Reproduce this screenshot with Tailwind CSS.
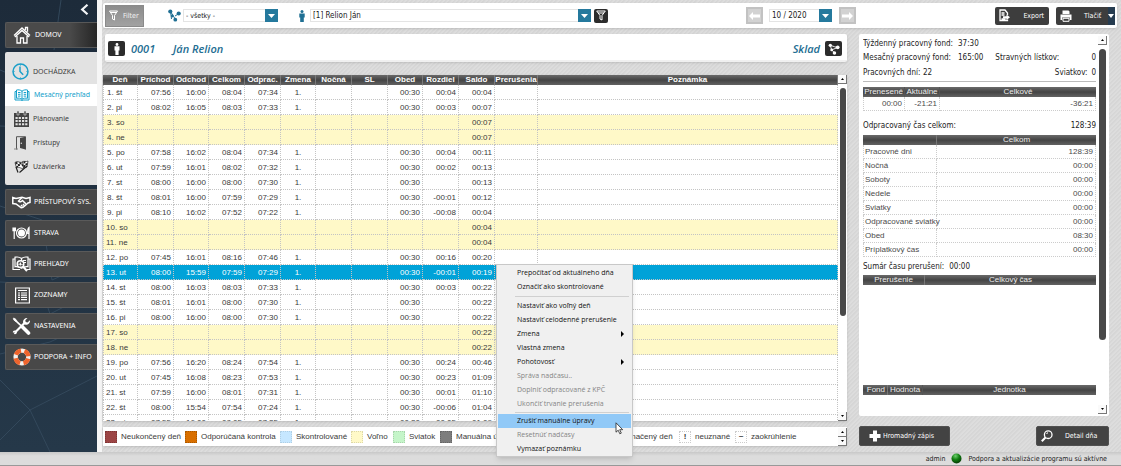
<!DOCTYPE html>
<html lang="sk">
<head>
<meta charset="utf-8">
<title>Dochádzka – Mesačný prehľad</title>
<script src="https://cdn.jsdelivr.net/npm/@tailwindcss/browser@4"></script>
</head>
<body class="h-screen overflow-hidden flex flex-col relative text-[8px] leading-[10px] text-[#222] font-['DejaVu_Sans_Condensed','DejaVu_Sans',sans-serif]">
<div class="flex flex-1 min-h-0">

  <nav class="relative w-[97px] shrink-0 bg-gradient-to-b from-[#1d2b3a] to-[#253849] pl-[5px] text-white text-[7px] font-['Noto_Sans',sans-serif] overflow-hidden">
    <svg class="absolute inset-0 w-full h-full" viewBox="0 0 97 452" preserveAspectRatio="none" fill="none" stroke="#33485b" stroke-width="1" aria-hidden="true"><path d="M61 0L54 50M0 70l97 40M0 126l97 4M0 206l42 14 10 60L97 260M0 282l40 2 10 30L97 290M0 354l50-12 47-22M0 380l30 30 67-34M30 410l20 42M0 440l30-30"/></svg>
    <div class="relative flex flex-col gap-1">
      <div class="flex justify-end h-[18px] pr-2 items-center">
        <button aria-label="Zbaliť menu" class="flex"><svg width="9" height="11" viewBox="0 0 9 11" fill="none" stroke="#f2f4f6" stroke-width="2.2"><path d="M7.500.8L2.200 5.500l5.300 4.700"/></svg></button>
      </div>
      <a href="#" class="flex items-center gap-1 h-[26px] pl-[7px] bg-gradient-to-r from-[#4a4a4a] from-70% to-[#262626] border border-r-0 border-[#585858] rounded-l-xs">
        <svg class="shrink-0" width="18" height="18" viewBox="0 0 18 18" fill="none" stroke="#fff" stroke-width="1.300"><path d="M1 9.500L9 2l8 7.500M1.800 11L9 4.500l7.200 6.500M4 10v7h3.500v-5h3v5H14v-7M12.500 4V1.500h2v4.300"/></svg>DOMOV</a>
      <div class="h-[133px] bg-[#e2e2e2] text-[#3c3c3c] pt-[7px] rounded-l-xs">
        <a href="#" class="flex items-center gap-1 h-[25px] pl-[7px]"><svg class="shrink-0" width="17" height="17" viewBox="0 0 17 17" fill="none" stroke="#1b9fc9" stroke-width="1.500"><circle cx="8.500" cy="8.500" r="7.500"/><path d="M8 3.500v5l3.200 3.200" /><path stroke-width="1" d="M8.500 1.500v1M8.500 14.500v1M1.500 8.500h1M14.500 8.500h1"/></svg>DOCHÁDZKA</a>
        <a href="#" class="flex items-center gap-1 h-[22px] pl-[9px] bg-white text-[#14a0cb]"><svg class="shrink-0" width="16" height="12" viewBox="0 0 16 12" fill="none" stroke="#14a0cb" stroke-width="1"><path d="M8 2.200C6.500.8 4 .6 2.500 1v8.300c2-.4 4-.2 5.500 1 1.500-1.200 3.500-1.400 5.500-1V1C12 .6 9.500.8 8 2.200zM8 2v8.500M2.500 2.500H1v8.500h6l1 .6 1-.6h6V2.500h-1.500M4 3.500h2.500M4 5.300h2.500M4 7.100h2.500M9.700 3.500h2.500M9.700 5.300h2.500M9.700 7.100h2.500"/></svg>Mesačný prehľad</a>
        <a href="#" class="flex items-center gap-1 h-[26px] pl-[9px]"><svg class="shrink-0" width="15" height="16" viewBox="0 0 15 16"><path d="M0 2h15v14H0z" fill="#444"/><path d="M3 0h2v4H3zM10 0h2v4h-2z" fill="#444" stroke="#e2e2e2" stroke-width=".6"/><path fill="#e2e2e2" d="M1.500 6h2.200v2H1.500zM4.700 6h2.200v2H4.700zM8 6h2.200v2H8zM11.200 6h2.200v2h-2.200zM1.500 9h2.200v2H1.500zM4.700 9h2.200v2H4.700zM8 9h2.200v2H8zM11.200 9h2.200v2h-2.200zM1.500 12.200h2.200v2H1.500zM4.700 12.200h2.200v2H4.700zM8 12.200h2.200v2H8zM11.200 12.200h2.200v2h-2.200z"/></svg>Plánovanie</a>
        <a href="#" class="flex items-center gap-1 h-[22px] pl-[9px]"><svg class="shrink-0" width="15" height="14" viewBox="0 0 15 14"><path d="M2.500 13.500V.7h9v12.800" fill="none" stroke="#555"/><path fill="#444" d="M6 2l5.500-1.300v12.800L6 12z"/><path d="M0 13h4" stroke="#888"/><circle cx="7.300" cy="7.300" r=".7" fill="#e2e2e2"/></svg>Prístupy</a>
        <a href="#" class="flex items-center gap-1 h-[25px] pl-[9px]"><svg class="shrink-0" width="15" height="13" viewBox="0 0 15 13"><path fill="#fff" stroke="#333" stroke-width=".8" d="M1 2.500C4 .2 6 3.500 8.500 2l1.200 6C7 9.500 5.500 6 2.500 8zM8 2c2-1.500 4 .3 6-1l-1 6c-1.500 1-3 0-4 1"/><path fill="#222" d="M1.200 2.500l2-.8.5 2-2 .8zM5.300 2.200l2 .3.4 2-2-.3zM3.600 4l2-.1.500 2-2 .1zM7.500 4.500l1.700-.6.4 2-1.500.5zM2.300 6l1.700-.3.300 1.300-1.700.6zM9.500 1.500l2-.2-.3 2-1.800.2zM11.500 3.500l2-.4-.4 2-1.800.4zM10 5l1.500.3-.4 1.800-1.500-.2z"/><path d="M2 7l2 5.500M13 6L5.500 12.500" stroke="#222" stroke-width="1.200"/></svg>Uzávierka</a>
      </div>
      <div class="flex flex-col gap-[5px]">
        <a href="#" class="flex items-center gap-[3px] h-[26px] pl-[6px] bg-[#484848] border border-r-0 border-[#5a5a5a] rounded-l-xs whitespace-nowrap"><svg class="shrink-0" width="19" height="13" viewBox="0 0 19 13" fill="none" stroke="#fff" stroke-width="1.500"><path d="M.8 1.500v6L4 8l5 3.700c1 .4 2 0 4.500-2.500L16 7l2-.5v-5L14 2.500 10 1.300 4 2.500.8 1.500z"/><path d="M10 1.500L6.500 5c1 1.500 3 .5 4-.5L14 8M9 9l1.500 1.500M11 8l1.500 1.700"/></svg>PRÍSTUPOVÝ SYS.</a>
        <a href="#" class="flex items-center gap-[3px] h-[26px] pl-[6px] bg-[#484848] border border-r-0 border-[#5a5a5a] rounded-l-xs"><svg class="shrink-0" width="19" height="14" viewBox="0 0 19 14" fill="none" stroke="#fff"><circle cx="9.500" cy="7" r="5" stroke-width="1.200"/><circle cx="9.500" cy="7" r="3.500" fill="#fff" stroke="none"/><path stroke-width="1.200" d="M1 1.500v3.200h2.400V1.500M2.200 1.500V13M17 13V1.500c-1.200 1-1.500 3-1.300 6H17"/></svg>STRAVA</a>
        <a href="#" class="flex items-center gap-[3px] h-[26px] pl-[6px] bg-[#484848] border border-r-0 border-[#5a5a5a] rounded-l-xs"><svg class="shrink-0" width="19" height="16" viewBox="0 0 19 16" fill="none" stroke="#fff" stroke-width="1.200"><path d="M9.500 2.500C7.500.8 5 .8 3 1.200v9.500c2-.3 4-.2 6.500 1.500 2.500-1.700 4.500-1.800 6.500-1.500V1.200c-2-.4-4.500-.4-6.500 1.300zM9.500 2.500V7M3 3H1v10.500h7M16 3h2v10.500h-3M11 4.500h3M11 6.500h3"/><circle cx="8.500" cy="8" r="3.300" fill="#484848" stroke-width="1.500"/><path stroke-width="2" d="M11 10.500l4 4.500"/><path d="M7 9V7.500M8.500 9.500v-3M10 9V8"/></svg>PREHĽADY</a>
        <a href="#" class="flex items-center gap-[3px] h-[26px] pl-2 bg-[#484848] border border-r-0 border-[#5a5a5a] rounded-l-xs"><svg class="shrink-0" width="17" height="17" viewBox="0 0 17 17" fill="none" stroke="#fff"><path stroke-width="1.200" d="M1.600 1h13.800v15H1.600z"/><path d="M4 3.500h9M4 6h2M7 6h6M4 8.200h2M7 8.200h6M4 10.400h2M7 10.400h6M4 12.600h2M7 12.600h6" stroke-width="1.200"/></svg>ZOZNAMY</a>
        <a href="#" class="flex items-center gap-[3px] h-[26px] pl-[6px] bg-[#484848] border border-r-0 border-[#5a5a5a] rounded-l-xs"><svg class="shrink-0" width="19" height="18" viewBox="0 0 19 18" fill="none" stroke="#fff"><path stroke-width="2.200" d="M3 15.500L12.500 6"/><path fill="#fff" stroke="none" d="M11 5c0-2.500 2-4.300 4.500-4L13.300 3.300l.4 1.800 1.800.4L18 3.200c.3 2.600-1.600 4.600-4.300 4.500L11.500 7z"/><path fill="#fff" stroke="none" d="M.8 15.500c0-1.500 1-2.300 2.400-2 1.400.3 2 1.500 1.500 2.700-.5 1-2 1.400-3 .6l1.300-1.200z"/><path d="M2 2.200l7 6.500" stroke-width="1.600"/><path d="M1.200 1l2 .6 1.500 2-.9.9-2-1.500z" fill="#fff" stroke-width=".5"/><path d="M10.500 10l6 6" stroke-width="3.600" stroke-linecap="round"/></svg>NASTAVENIA</a>
        <a href="#" class="flex items-center gap-[3px] h-[26px] pl-[7px] bg-[#484848] border border-r-0 border-[#5a5a5a] rounded-l-xs whitespace-nowrap"><svg class="shrink-0" width="18" height="18" viewBox="0 0 18 18" fill="none" stroke-width="4.400"><circle cx="9" cy="9" r="6.400" stroke="#f4f0ec"/><circle cx="9" cy="9" r="6.400" stroke="#f0642c" stroke-dasharray="6.500 3.553" stroke-dashoffset="8.300"/></svg>PODPORA + INFO</a>
      </div>
    </div>
  </nav>

  <main class="flex-1 min-w-0 flex flex-col pt-[3px] bg-[repeating-linear-gradient(135deg,#d6d6d6_0px,#d6d6d6_1px,#dddddd_2px,#dddddd_3px)] border-l-[5px] border-[#f6f6f6] pl-px">
    <header class="h-[25px] mr-1 bg-white rounded-xs shadow-sm flex items-center pl-[2px] pr-[2px]">
      <button class="h-[22px] w-[39px] shrink-0 bg-gradient-to-b from-[#8c8c8c] to-[#a2a2a2] border border-[#8a8a8a] text-[#f2f2f2] flex items-center gap-[5px] pl-[3px] text-[7px]"><svg width="9" height="11" viewBox="0 0 9 11" fill="none" stroke="#fff"><path d="M.5 1h8L5.500 5.500V10L3.500 9V5.500zM1.500 2.500h6"/></svg>Filter</button>
      <svg class="ml-6 shrink-0" width="13" height="13" viewBox="0 0 13 13"><path d="M2.500 2.500L3.500 10M2.500 2.500L7.500 10.500M7 7l4-2.500" stroke="#1f6f93" stroke-width="1"/><g fill="#1f6f93"><circle cx="2.300" cy="2.500" r="2.100"/><circle cx="10.700" cy="4.500" r="2.100"/><circle cx="4.300" cy="7" r="1.400"/><circle cx="7.300" cy="10.700" r="1.900"/></g></svg>
      <div class="ml-[2px] flex w-[95px] h-[13px] shrink-0 border border-r-0 border-[#e4e4e4]">
        <select aria-label="Stredisko" class="appearance-none flex-1 min-w-0 pl-[2px] text-[7px] text-[#222]"><option>- všetky -</option></select>
        <span class="w-[13px] -my-px bg-[#24799d] flex items-center justify-center"><svg width="7" height="4" viewBox="0 0 7 4"><path fill="#fff" d="M0 0h7L3.500 4z"/></svg></span>
      </div>
      <svg class="ml-[21px] shrink-0" width="6" height="12" viewBox="0 0 6 12" fill="#1f6f93"><circle cx="3" cy="1.500" r="1.500"/><path d="M.3 3.500h5.400v4H4.800V12H1.200V7.500H.3z"/></svg>
      <div class="ml-[5px] flex flex-1 min-w-[90px] h-[13px] border border-r-0 border-[#e4e4e4]">
        <select aria-label="Osoba" class="appearance-none flex-1 min-w-0 pl-[2px] text-[#222]"><option>[1] Relion Ján</option></select>
        <span class="w-[13px] -my-px bg-[#24799d] flex items-center justify-center"><svg width="7" height="4" viewBox="0 0 7 4"><path fill="#fff" d="M0 0h7L3.500 4z"/></svg></span>
      </div>
      <button aria-label="Filtrovať osoby" class="ml-[3px] size-[14px] shrink-0 bg-[#2c2c2c] rounded-xs flex items-center justify-center"><svg width="10" height="11" viewBox="0 0 10 11" fill="none" stroke="#fff"><path d="M.7 1h8.600L6 5.500V10L4 9V5.500zM2 3h6"/></svg></button>
      <button aria-label="Predchádzajúci mesiac" class="ml-[138px] w-[17px] h-[17px] shrink-0 bg-[#d2d2d2] border-2 border-[#c2c2c2] flex items-center justify-center"><svg width="11" height="8" viewBox="0 0 11 8"><path fill="#fff" d="M0 4l4-4v2.500h7v3H4V8z"/></svg></button>
      <div class="ml-[6px] flex w-[63px] h-[13px] shrink-0 border border-r-0 border-[#e4e4e4]">
        <select aria-label="Mesiac" class="appearance-none flex-1 min-w-0 pl-[2px] text-[#222]"><option>10 / 2020</option></select>
        <span class="w-[13px] -my-px bg-[#24799d] flex items-center justify-center"><svg width="7" height="4" viewBox="0 0 7 4"><path fill="#fff" d="M0 0h7L3.500 4z"/></svg></span>
      </div>
      <button aria-label="Nasledujúci mesiac" class="ml-[7px] w-[17px] h-[17px] shrink-0 bg-[#d2d2d2] border-2 border-[#c2c2c2] flex items-center justify-center"><svg width="11" height="8" viewBox="0 0 11 8"><path fill="#fff" d="M11 4L7 0v2.500H0v3h7V8z"/></svg></button>
      <button class="ml-[139px] w-[54px] h-[18px] shrink-0 bg-[#3d3d3d] text-white rounded-xs flex items-center justify-between pl-1 pr-[5px] text-[7px]"><svg width="11" height="13" viewBox="0 0 11 13" fill="none" stroke="#fff" stroke-width="1.300"><path d="M8.500 6V4L6 1H1v10.500h7.500V10.500M2.500 4h3M2.500 6h3M2.500 10h4"/><path fill="#fff" stroke="none" d="M4 7.200h3.500V5.500L11 8.300l-3.500 2.800V9.400H4z"/></svg>Export</button>
      <button class="ml-[7px] w-[59px] h-[18px] shrink-0 bg-[#3d3d3d] text-white rounded-xs flex items-center pl-1 text-[7px]"><svg width="12" height="12" viewBox="0 0 12 12"><path fill="#fff" d="M2.500.5h6l1 1V4h-7zM.5 4.500h11V10H9.800V7.500H2.200V10H.5z"/><path d="M3 8.300h6v3H3z" fill="#3d3d3d" stroke="#fff"/></svg><span class="ml-3">Tlačiť</span><span class="ml-auto w-[7px] h-full bg-[#263c50] flex items-center"><svg width="6" height="4" viewBox="0 0 6 4"><path fill="#fff" d="M0 0h6L3 4z"/></svg></span></button>
    </header>

    <div class="flex flex-1 min-h-0 gap-3 mt-[6px] mr-3 mb-[6px]">
      <div class="flex-1 min-w-0 flex flex-col">
        <section class="h-[28px] shrink-0 ml-[2px] bg-white rounded-xs shadow-sm flex items-center pl-[3px] pr-[5px] text-[11px] font-semibold italic text-[#1d6d92] font-['Open_Sans',sans-serif] border-b-2 border-[#f0f0f0]">
          <span class="w-[17px] h-[15px] mt-[3px] bg-[#2c2c2c] rounded-xs flex items-center justify-center"><svg width="6" height="12" viewBox="0 0 6 12" fill="#fff"><circle cx="3" cy="1.500" r="1.400"/><path d="M.5 3.300h5v4.200h-.9V12H1.400V7.500H.5z"/></svg></span>
          <span class="ml-[6px] mt-[3px] w-[42px]">0001</span><span class="mt-[3px]">Ján Relion</span>
          <span class="ml-auto mt-[3px] mr-[5px]">Sklad</span>
          <span class="w-[17px] h-[15px] mt-[3px] bg-[#2c2c2c] rounded-xs flex items-center justify-center"><svg width="12" height="12" viewBox="0 0 13 13"><path d="M2.500 2.500L4 7.500l3 3M2.500 2.500L7 4l4 1M4 7.500L10 5" stroke="#fff"/><g fill="#fff"><circle cx="2.500" cy="2.500" r="1.800"/><circle cx="10.500" cy="4.700" r="2"/><circle cx="4" cy="7.500" r="1.500"/><circle cx="7" cy="10.800" r="1.900"/></g></svg></span>
        </section>

        <section class="mt-[13px] flex-1 min-h-0 flex bg-white shadow-sm font-['Liberation_Sans',Arial,sans-serif] text-[#3a3a3a]">
          <div class="flex-1 min-w-0 overflow-hidden">
            <table class="w-full table-fixed border-separate border-spacing-0">
              <colgroup><col class="w-[35px]"><col class="w-[36px]"><col class="w-[35px]"><col class="w-[36px]"><col class="w-[36px]"><col class="w-[35px]"><col class="w-[36px]"><col class="w-[36px]"><col class="w-[35px]"><col class="w-[36px]"><col class="w-[36px]"><col class="w-[43px]"><col></colgroup>
              <thead class="bg-gradient-to-b from-[#6a6a6a] via-[#444] to-[#626262] text-white"><tr id="head"></tr></thead>
              <tbody id="days"></tbody>
            </table>
          </div>
          <div class="w-[9px] flex flex-col items-center justify-between bg-white shrink-0">
            <button aria-label="Hore" class="size-[9px] bg-[#fafafa] border-r border-b border-[#777] flex items-center justify-center"><svg width="3" height="2" viewBox="0 0 3 2"><path d="M0 2h3L1.500 0z"/></svg></button>
            <div class="w-[6px] mt-1 h-[228px] rounded-full bg-[#484848]"></div>
            <div class="flex-1"></div>
            <button aria-label="Dole" class="size-[9px] bg-[#fafafa] border-r border-b border-[#777] flex items-center justify-center"><svg width="3" height="2" viewBox="0 0 3 2"><path d="M0 0h3L1.500 2z"/></svg></button>
          </div>
        </section>

        <section class="mt-[6px] h-[19px] shrink-0 bg-white shadow-sm flex items-center pl-[2px] font-['Liberation_Sans',Arial,sans-serif] text-[#3a3a3a] whitespace-nowrap">
          <span class="w-[80px] shrink-0 flex items-center gap-1"><i class="size-3 bg-[#9c4545] border border-dotted border-[#7d3535]"></i>Neukončený deň</span>
          <span class="w-[95px] shrink-0 flex items-center gap-1"><i class="size-3 bg-[#d86f00] border border-dotted border-[#a85800]"></i>Odporúčaná kontrola</span>
          <span class="w-[71px] shrink-0 flex items-center gap-1"><i class="size-3 bg-[#c6e7ff] border border-dotted border-[#b0cfe4]"></i>Skontrolované</span>
          <span class="w-[42px] shrink-0 flex items-center gap-1"><i class="size-3 bg-[#fff9c8] border border-dotted border-[#ddd8a8]"></i>Voľno</span>
          <span class="w-[47px] shrink-0 flex items-center gap-1"><i class="size-3 bg-[#c5f5c9] border border-dotted border-[#a8d4ac]"></i>Sviatok</span>
          <span class="w-[165px] shrink-0 flex items-center gap-1"><i class="size-3 bg-[#7d7d7d] border border-dotted border-[#666]"></i>Manuálna úprava</span>
          <span class="w-[74px] shrink-0 flex items-center gap-1"><i class="size-3 bg-[#00a2d8]"></i>Označený deň</span>
          <span class="w-[56px] shrink-0 flex items-center gap-1"><b class="size-3 border border-dotted border-[#ccc] text-center">!</b>neuznané</span>
          <span class="flex items-center gap-1"><b class="size-3 border border-dotted border-[#ccc] text-center">~</b>zaokrúhlenie</span>
          <span class="ml-auto flex flex-col">
            <button aria-label="Legenda hore" class="size-[9px] bg-[#fafafa] border-r border-b border-[#777] flex items-center justify-center"><svg width="3" height="2" viewBox="0 0 3 2"><path d="M0 2h3L1.500 0z"/></svg></button>
            <button aria-label="Legenda dole" class="size-[9px] bg-[#fafafa] border-r border-b border-[#777] flex items-center justify-center"><svg width="3" height="2" viewBox="0 0 3 2"><path d="M0 0h3L1.500 2z"/></svg></button>
          </span>
        </section>
      </div>

      <aside class="w-[250px] shrink-0 flex flex-col">
        <div class="flex-1 min-h-0 bg-white rounded-xs flex pl-1 pr-[2px] pt-[2px] pb-[2px]">
          <div class="flex-1 min-w-0 overflow-hidden pt-px">
            <div class="flex h-[14px] items-center"><span class="w-[95px]">Týždenný pracovný fond:</span><span>37:30</span></div>
            <div class="flex h-[14px] items-center"><span class="w-[95px]">Mesačný pracovný fond:</span><span>165:00</span><span class="ml-3">Stravných lístkov:</span><span class="ml-auto">0</span></div>
            <div class="flex h-[17px] items-center border-b border-[#bbb]"><span class="w-[60px] whitespace-nowrap">Pracovných dní:</span><span>22</span><span class="ml-auto mr-1">Sviatkov:</span><span>0</span></div>
            <table class="mt-[5px] w-full table-fixed border-separate border-spacing-0 font-['Liberation_Sans',Arial,sans-serif] text-[#4a4a4a]">
              <colgroup><col class="w-[42px]"><col class="w-[35px]"><col></colgroup>
              <thead class="bg-gradient-to-b from-[#6a6a6a] via-[#444] to-[#626262] text-[#eee]"><tr class="h-[10px]"><th class="p-0 font-normal border-r border-[#555]">Prenesené</th><th class="p-0 font-normal border-r border-[#555]">Aktuálne</th><th class="p-0 font-normal">Celkové</th></tr></thead>
              <tbody><tr class="h-[14px] text-right"><td class="py-0 pl-0 pr-[2px] border-b border-r border-l border-dotted border-[#ccc]">00:00</td><td class="py-0 pl-0 pr-[2px] border-b border-r border-dotted border-[#ccc]">-21:21</td><td class="py-0 pl-0 pr-[2px] border-b border-r border-dotted border-[#ccc]">-36:21</td></tr></tbody>
            </table>
            <div class="flex h-6 items-center justify-between pt-[6px]"><span>Odpracovaný čas celkom:</span><span>128:39</span></div>
            <table class="w-full table-fixed border-separate border-spacing-0 font-['Liberation_Sans',Arial,sans-serif] text-[#4a4a4a]">
              <colgroup><col class="w-[74px]"><col></colgroup>
              <thead class="bg-gradient-to-b from-[#6a6a6a] via-[#444] to-[#626262] text-[#eee]"><tr class="h-[10px]"><th class="p-0 border-r border-[#777]"></th><th class="p-0 font-normal">Celkom</th></tr></thead>
              <tbody id="totals"></tbody>
            </table>
            <div class="flex h-[18px] items-center gap-[5px] pt-[2px]"><span>Sumár času prerušení:</span><span>00:00</span></div>
            <table class="w-full table-fixed border-separate border-spacing-0 font-['Liberation_Sans',Arial,sans-serif]">
              <colgroup><col class="w-[62px]"><col></colgroup>
              <thead class="bg-gradient-to-b from-[#6a6a6a] via-[#444] to-[#626262] text-[#eee]"><tr class="h-[10px]"><th class="p-0 font-normal border-r border-[#777]">Prerušenie</th><th class="p-0 font-normal">Celkový čas</th></tr></thead>
            </table>
            <table class="mt-[100px] w-full table-fixed border-separate border-spacing-0 font-['Liberation_Sans',Arial,sans-serif]">
              <colgroup><col class="w-[25px]"><col class="w-[35px]"><col></colgroup>
              <thead class="bg-gradient-to-b from-[#6a6a6a] via-[#444] to-[#626262] text-[#eee]"><tr class="h-[10px]"><th class="p-0 font-normal text-right pr-[2px] border-r border-[#777]">Fond</th><th class="p-0 font-normal border-r border-[#555]">Hodnota</th><th class="p-0 font-normal">Jednotka</th></tr></thead>
            </table>
          </div>
          <div class="ml-[2px] w-[9px] flex flex-col items-center shrink-0">
            <button aria-label="Panel hore" class="size-[9px] shrink-0 bg-[#fafafa] border-r border-b border-[#777] flex items-center justify-center"><svg width="3" height="2" viewBox="0 0 3 2"><path d="M0 2h3L1.500 0z"/></svg></button>
            <div class="w-[7px] mt-1 h-[291px] rounded-full bg-[#484848]"></div>
            <div class="flex-1"></div>
            <button aria-label="Panel dole" class="size-[9px] shrink-0 bg-[#fafafa] border-r border-b border-[#777] flex items-center justify-center"><svg width="3" height="2" viewBox="0 0 3 2"><path d="M0 0h3L1.500 2z"/></svg></button>
          </div>
        </div>
        <div class="mt-[10px] flex justify-between h-5 shrink-0 text-[7px] text-white">
          <button class="w-[91px] bg-[#434343] border border-[#505050] rounded-xs flex items-center pl-[9px] gap-[2px]"><svg width="12" height="12" viewBox="0 0 12 12"><path fill="#fff" d="M4 .5h4V4h3.500v4H8v3.500H4V8H.5V4H4z"/></svg>Hromadný zápis</button>
          <button class="w-[73px] bg-[#434343] border border-[#505050] rounded-xs flex items-center pl-1 gap-3"><svg width="12" height="12" viewBox="0 0 12 12" fill="none" stroke="#fff"><circle cx="7.200" cy="4.700" r="3.800" stroke-width="1.300"/><path stroke-width="2" d="M4.500 7.500L.8 11.200"/><path d="M5.500 4a2 2 0 0 1 1.500-1.300"/></svg>Detail dňa</button>
        </div>
      </aside>
    </div>
  </main>
</div>

<footer class="h-[14px] shrink-0 bg-gradient-to-b from-[#c8c8c8] to-[#dcdcdc] to-30% border-b border-[#999] flex items-center justify-end pr-[14px] gap-[6px] text-[7px]">
  <span>admin</span>
  <svg width="11" height="11" viewBox="0 0 11 11"><defs><radialGradient id="led" cx=".4" cy=".25" r=".75"><stop offset="0" stop-color="#6fd06f"/><stop offset=".5" stop-color="#128012"/><stop offset="1" stop-color="#053d05"/></radialGradient></defs><circle cx="5.500" cy="5.500" r="5" fill="url(#led)"/></svg>
  <span>Podpora a aktualizácie programu sú aktívne</span>
</footer>

<div role="menu" class="absolute left-[496px] top-[264px] w-[137px] bg-[#f0f0f0] border border-[#c8c8c8] shadow-md px-px pt-px text-[#111] text-[7px] font-['Open_Sans',sans-serif] flex flex-col" id="menu"></div>
<svg class="absolute left-[615px] top-[422px]" width="9" height="13" viewBox="0 0 9 13"><path d="M1 .8v9.400l2.200-2 1.600 3.600 1.500-.7-1.600-3.400h3z" fill="#fff" stroke="#222" stroke-width=".8"/></svg>

<script>
const heads = ['Deň','Príchod','Odchod','Celkom','Odprac.','Zmena','Nočná','SL','Obed','Rozdiel','Saldo','Prerušenia','Poznámka'];
document.getElementById('head').innerHTML = heads.map(h => `<th class="h-[10px] p-0 font-bold text-center border-r border-[#7a7a7a] whitespace-nowrap">${h}</th>`).join('');
const days = [
 ['1. št','07:56','16:00','08:04','07:34','00:04','00:04'],
 ['2. pi','08:02','16:05','08:03','07:33','00:03','00:07'],
 ['3. so','00:07'],['4. ne','00:07'],
 ['5. po','07:58','16:02','08:04','07:34','00:04','00:11'],
 ['6. ut','07:59','16:01','08:02','07:32','00:02','00:13'],
 ['7. st','08:00','16:00','08:00','07:30','','00:13'],
 ['8. št','08:01','16:00','07:59','07:29','-00:01','00:12'],
 ['9. pi','08:10','16:02','07:52','07:22','-00:08','00:04'],
 ['10. so','00:04'],['11. ne','00:04'],
 ['12. po','07:45','16:01','08:16','07:46','00:16','00:20'],
 ['13. ut','08:00','15:59','07:59','07:29','-00:01','00:19'],
 ['14. st','08:00','16:03','08:03','07:33','00:03','00:22'],
 ['15. št','08:01','16:01','08:00','07:30','','00:22'],
 ['16. pi','08:00','16:00','08:00','07:30','','00:22'],
 ['17. so','00:22'],['18. ne','00:22'],
 ['19. po','07:56','16:20','08:24','07:54','00:24','00:46'],
 ['20. ut','07:45','16:08','08:23','07:53','00:23','01:09'],
 ['21. st','07:59','16:00','08:01','07:31','00:01','01:10'],
 ['22. št','08:00','15:54','07:54','07:24','-00:06','01:04'],
 ['23. pi','07:55','16:00','08:05','07:35','-00:05','01:09']
];
const td = (t, c) => `<td class="h-[15px] pt-px pb-0 border-b border-r border-dotted border-[#c4c4c4] ${c}">${t}</td>`;
document.getElementById('days').innerHTML = days.map((d, i) => {
  const off = d.length === 2;
  const v = off ? [d[0],'','','','','','','','','',d[1],'',''] : [d[0],d[1],d[2],d[3],d[4],'1.','','','00:30',d[5],d[6],'',''];
  const row = i === 12 ? 'bg-[#00a2d8] text-white' : off ? 'bg-[#fff9c8]' : 'bg-white';
  return `<tr class="${row}">` + v.map((t, k) => td(t, k === 0 ? (i < 9 ? 'pl-[3px] pr-0 border-l' : 'pl-[2px] pr-0 border-l') : k === 5 ? 'text-center px-0' : 'text-right pl-0 pr-[2px]')).join('') + '</tr>';
}).join('');
const totals = [['Pracovné dni','128:39'],['Nočná','00:00'],['Soboty','00:00'],['Nedele','00:00'],['Sviatky','00:00'],['Odpracované sviatky','00:00'],['Obed','08:30'],['Príplatkový čas','00:00']];
document.getElementById('totals').innerHTML = totals.map(([a, b]) => `<tr class="h-[14px]"><td class="py-0 pl-px pr-0 whitespace-nowrap border-l border-b border-r border-dotted border-[#ccc]">${a}</td><td class="py-0 pl-0 pr-[2px] text-right border-b border-r border-dotted border-[#ccc]">${b}</td></tr>`).join('');
const menu = ['Prepočítať od aktuálneho dňa','Označiť ako skontrolované','-','Nastaviť ako voľný deň','Nastaviť celodenné prerušenie','Zmena>','Vlastná zmena','Pohotovosť>','#Správa nadčasu..','#Doplniť odpracované z KPČ','#Ukončiť trvanie prerušenia','--','*Zrušiť manuálne úpravy','#Resetnúť nadčasy','Vymazať poznámku'];
document.getElementById('menu').innerHTML = menu.map(m => {
  if (m === '-') return '<hr class="my-[2px] ml-[17px] mr-[2px] border-[#d0d0d0]">';
  if (m === '--') return '<hr class="my-px ml-[17px] mr-[2px] border-[#d0d0d0]">';
  const off = m[0] === '#', on = m[0] === '*', sub = m.endsWith('>');
  return `<button role="menuitem" ${off ? 'disabled' : ''} class="h-[14px] pl-[19px] pr-[7px] flex items-center justify-between text-left whitespace-nowrap ${off ? 'text-[#858585]' : on ? 'bg-[#91c9f7]' : ''}"><span>${m.replace(/[#*>]/g, '')}</span>${sub ? '<svg width="3" height="6" viewBox="0 0 3 6"><path d="M0 0l3 3-3 3z"/></svg>' : ''}</button>`;
}).join('');
</script>
</body>
</html>
